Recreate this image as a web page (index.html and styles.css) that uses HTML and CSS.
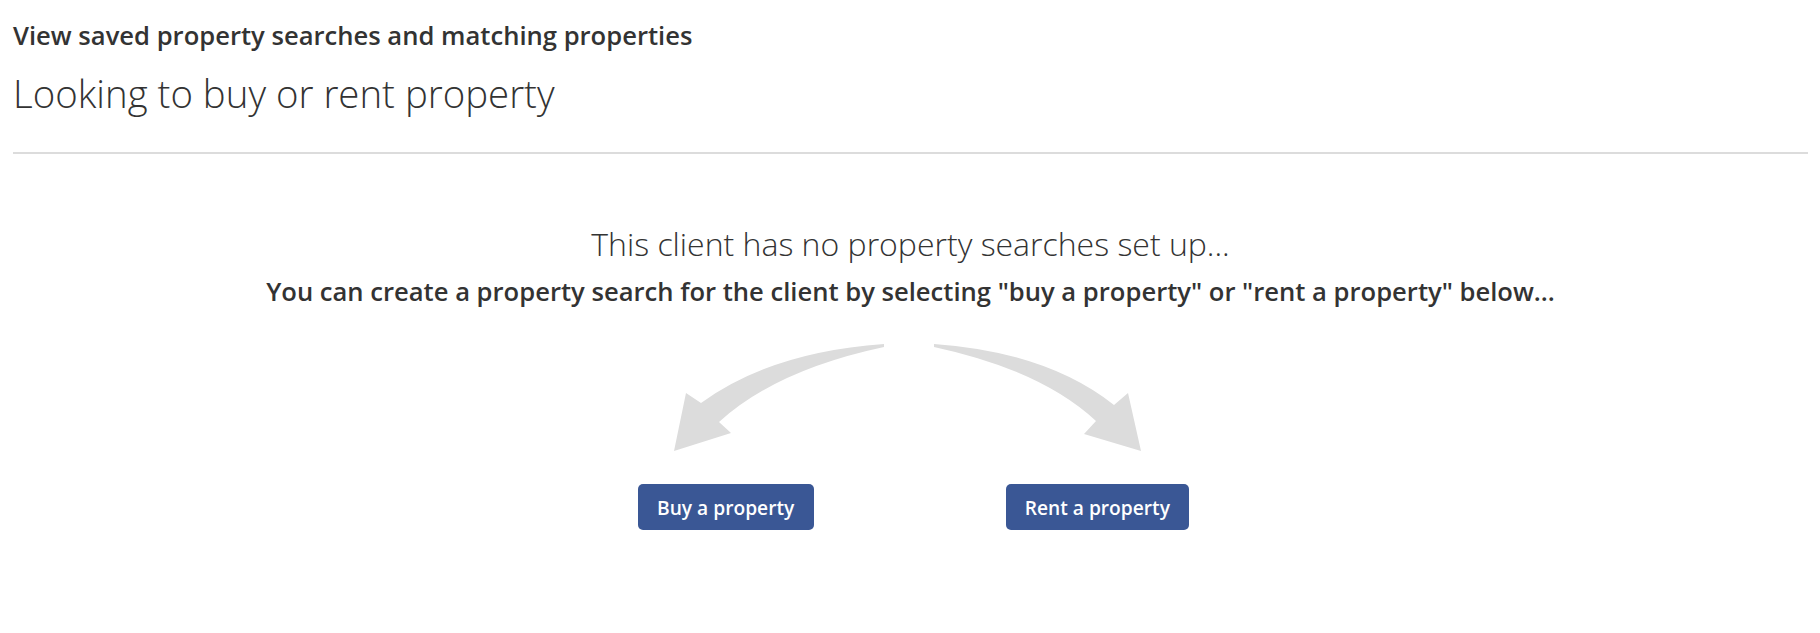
FILE: index.html
```html
<!DOCTYPE html>
<html lang="en">
<head>
  <meta charset="UTF-8" />
  <meta name="viewport" content="width=device-width, initial-scale=1" />
  <title>Property searches</title>
  <link rel="stylesheet" href="styles.css">
</head>
<body>
  <div class="page">
    <div class="page-header">
      <div class="page-subtitle">View saved property searches and matching properties</div>
      <h1 class="page-title">Looking to buy or rent property</h1>
    </div>

    <div class="empty-state">
      <p class="empty-lead">This client has no property searches set up...</p>
      <p class="empty-hint">You can create a property search for the client by selecting "buy a property" or "rent a property" below...</p>

      <svg class="empty-arrows" width="510" height="120" viewBox="655 340 510 120" aria-hidden="true">
        <path d="M883 344 Q770 352 700 403 L685 393 L673 451 L730 433 L718 422 Q775 370 883 347 Z" fill="#dcdcdc"/>
        <path d="M933 344 Q1046 352 1113 405 L1127 393 L1140 451 L1083 434 L1095 421 Q1040 370 933 347 Z" fill="#dcdcdc"/>
      </svg>

      <div class="empty-actions">
        <button class="btn-primary" type="button">Buy a property</button>
        <button class="btn-primary" type="button">Rent a property</button>
      </div>
    </div>
  </div>
</body>
</html>
```

FILE: styles.css
```css
html, body {
  margin: 0;
  background: #ffffff;
  font-family: "Open Sans", "Liberation Sans", sans-serif;
  color: #333333;
}
.page {
  padding: 0 12px 0 13px;
}
.page-header {
  padding-top: 18px;
  border-bottom: 2px solid #dcdcdc;
  padding-bottom: 33px;
}
.page-subtitle {
  font-size: 25.6px;
  font-weight: 600;
  line-height: 36px;
  color: #333333;
}
.page-title {
  margin: 13px 0 0;
  font-size: 38.4px;
  font-weight: 300;
  line-height: 52px;
  color: #333333;
}
.empty-state {
  display: flex;
  flex-direction: column;
  align-items: center;
  padding-top: 68px;
}
.empty-lead {
  margin: 0;
  font-size: 32px;
  font-weight: 300;
  line-height: 44px;
}
.empty-hint {
  margin: 8px 0 0;
  font-size: 25.6px;
  font-weight: 600;
  line-height: 36px;
}
.empty-arrows {
  display: block;
  margin-top: 30px;
}
.empty-actions {
  display: flex;
  gap: 192px;
  margin-top: 24px;
  padding-left: 6px;
}
.btn-primary {
  height: 46px;
  padding: 0 19.2px;
  font-family: inherit;
  font-size: 19.2px;
  font-weight: 600;
  color: #ffffff;
  background-color: #3a5795;
  border: none;
  border-radius: 5px;
  cursor: pointer;
}
.btn-primary:hover {
  background-color: #2f4a80;
}
```
